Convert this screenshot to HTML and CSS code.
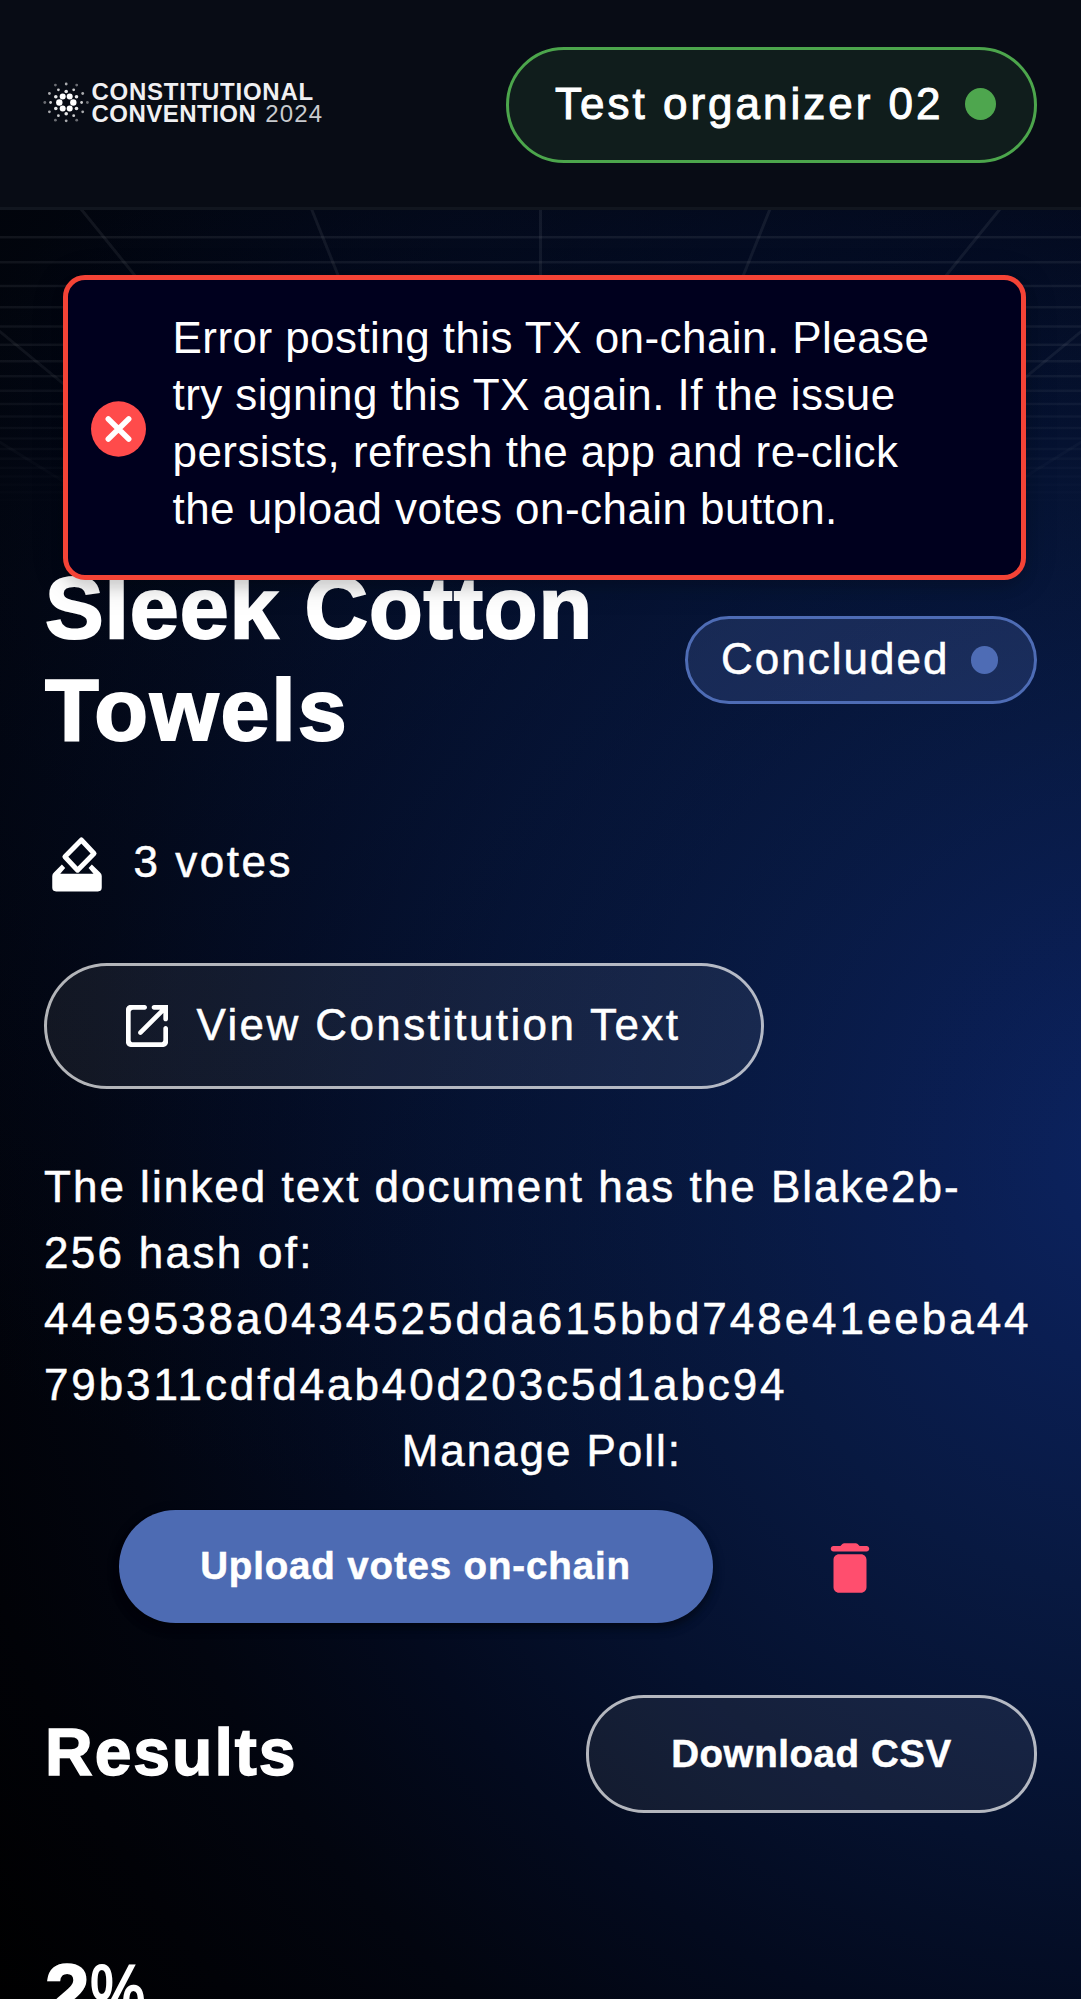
FILE: index.html
```html
<!DOCTYPE html>
<html lang="en">
<head>
<meta charset="utf-8">
<title>Sleek Cotton Towels</title>
<link rel="stylesheet" href="styles.css">
</head>
<body>
<svg class="grid" width="1081" height="330" viewBox="0 209 1081 330" fill="none" stroke="#fff" aria-hidden="true">
  <defs>
    <linearGradient id="fade" x1="0" y1="209" x2="0" y2="520" gradientUnits="userSpaceOnUse">
      <stop offset="0" stop-color="#fff"/>
      <stop offset=".5" stop-color="#fff" stop-opacity=".85"/>
      <stop offset="1" stop-color="#fff" stop-opacity="0"/>
    </linearGradient>
    <mask id="m" maskUnits="userSpaceOnUse" x="0" y="209" width="1081" height="330"><rect x="0" y="209" width="1081" height="330" fill="url(#fade)" stroke="none"/></mask>
  </defs>
  <g mask="url(#m)" stroke-opacity=".068" stroke-width="2.6">
    <path d="M0 237.2H1081M0 262.3H1081M0 286H1081M0 307.2H1081M0 326.5H1081M0 344.7H1081M0 361.2H1081M0 376.3H1081M0 390.8H1081M0 404H1081M0 416.5H1081M0 428H1081M0 438.5H1081M0 449H1081M0 458.6H1081M0 467.8H1081M0 476.5H1081M0 484.6H1081M0 492.4H1081M0 500H1081M0 507H1081"/>
    <path stroke-width="3" d="M540.5 209V530M311.5 209L440 530M770 209L641 530M81 209L341 530M1000 209L740 530M-149 209L241 530M1230 209L840 530M-378 209L142 530M1459 209L939 530"/>
  </g>
</svg>

<header class="topbar">
  <a class="brand">
    <svg width="46" height="42" viewBox="43 81.5 46 42" fill="#fff" aria-hidden="true">
      <g><circle cx="59.3" cy="103" r="3.2"/><circle cx="73.3" cy="103" r="3.2"/><circle cx="62.7" cy="97" r="3"/><circle cx="69.7" cy="97" r="3"/><circle cx="62.7" cy="109" r="3"/><circle cx="69.7" cy="109" r="3"/></g>
      <g opacity=".9"><circle cx="66.2" cy="92" r="1.8"/><circle cx="66.2" cy="114.3" r="1.8"/><circle cx="55.8" cy="97.3" r="1.8"/><circle cx="76.5" cy="97.3" r="1.8"/><circle cx="55.8" cy="109" r="1.8"/><circle cx="76.5" cy="109" r="1.8"/></g>
      <g opacity=".8"><circle cx="58.4" cy="90.3" r="1.4"/><circle cx="73.7" cy="90.3" r="1.4"/><circle cx="50.6" cy="103" r="1.4"/><circle cx="81.6" cy="103" r="1.4"/><circle cx="58.4" cy="116.2" r="1.4"/><circle cx="73.7" cy="116.2" r="1.4"/></g>
      <g opacity=".65"><circle cx="66.2" cy="84.5" r="1.4"/><circle cx="66.2" cy="121.3" r="1.4"/><circle cx="49.4" cy="94" r="1.4"/><circle cx="82.7" cy="94" r="1.4"/><circle cx="49.4" cy="112.3" r="1.4"/><circle cx="82.7" cy="112.3" r="1.4"/></g>
      <g opacity=".4"><circle cx="55.4" cy="85.6" r="1.4"/><circle cx="76.7" cy="85.6" r="1.4"/><circle cx="44.8" cy="103" r="1.4"/><circle cx="87.4" cy="103" r="1.4"/><circle cx="55.4" cy="120.7" r="1.4"/><circle cx="76.7" cy="120.7" r="1.4"/></g>
    </svg>
    <span class="brand-text">
      <span class="brand-1">CONSTITUTIONAL</span>
      <span class="brand-2"><b>CONVENTION</b><span>2024</span></span>
    </span>
  </a>
  <div class="user"><span>Test organizer 02</span><i class="dot"></i></div>
</header>

<main class="page">
  <section class="title-row">
    <h1><span class="h-a">Sleek Cotton</span><br><span class="h-b">Towels</span></h1>
    <div class="status"><span>Concluded</span><i class="dot"></i></div>
  </section>

  <div class="votes">
    <svg width="66" height="66" viewBox="0 0 24 24" fill="#fff" aria-hidden="true">
      <path d="M6.500 11.800L7.700 13.100L5.900 15.200H18L16.200 13.100L17.400 11.800L20.300 14.600Q21 15.200 21 16V20.200Q21 21.600 19.600 21.600H4.400Q3 21.600 3 20.200V16Q3 15.200 3.700 14.600Z"/>
      <path d="M13.600 2.900L18.200 7.800L12.200 13.900L7.600 9Z" fill="none" stroke="#fff" stroke-width="1.800" stroke-linejoin="round"/>
    </svg>
    <span>3 votes</span>
  </div>

  <a class="view">
    <svg width="56" height="56" viewBox="0 0 24 24" fill="#fff" aria-hidden="true"><path d="M18 19H6c-.55 0-1-.45-1-1V6c0-.55.45-1 1-1h5c.55 0 1-.45 1-1s-.45-1-1-1H5c-1.110 0-2 .9-2 2v14c0 1.100.9 2 2 2h14c1.100 0 2-.9 2-2v-6c0-.55-.45-1-1-1s-1 .45-1 1v5c0 .55-.45 1-1 1zM14 4c0 .55.45 1 1 1h2.590l-9.130 9.130c-.39.39-.39 1.020 0 1.410.39.39 1.020.39 1.410 0L19 6.410V9c0 .55.45 1 1 1s1-.45 1-1V3h-6c-.55 0-1 .45-1 1z"/></svg>
    <span>View Constitution Text</span>
  </a>

  <p class="hash"><span class="p-a">The linked text document has the Blake2b-</span><br><span class="p-b">256 hash of:</span><br><span class="p-c">44e9538a0434525dda615bbd748e41eeba44</span><br><span class="p-d">79b311cdfd4ab40d203c5d1abc94</span></p>

  <p class="manage">Manage Poll:</p>
  <div class="actions">
    <button class="upload">Upload votes on-chain</button>
    <svg width="66" height="66" viewBox="0 0 24 24" fill="#ff4e6e" aria-label="Delete"><path d="M6 19c0 1.100.9 2 2 2h8c1.100 0 2-.9 2-2V9c0-1.100-.9-2-2-2H8c-1.100 0-2 .9-2 2v10zM18 4h-2.500l-.71-.71c-.18-.18-.44-.29-.7-.29H9.910c-.26 0-.52.11-.7.29L8.500 4H6c-.55 0-1 .45-1 1s.45 1 1 1h12c.55 0 1-.45 1-1s-.45-1-1-1z"/></svg>
  </div>

  <section class="results">
    <h2>Results</h2>
    <button class="download">Download CSV</button>
  </section>
  <div class="percent"><b>2</b><span>%</span></div>
</main>

<div class="toast" role="alert">
  <svg width="55" height="56" viewBox="0 0 55 56" aria-hidden="true"><ellipse cx="27.500" cy="28" rx="27.500" ry="27.700" fill="#ff4b4b"/><path d="M17.300 18L37.700 38M37.700 18L17.300 38" stroke="#fff" stroke-width="5.500" stroke-linecap="round"/></svg>
  <p>Error posting this TX on-chain. Please<br>try signing this TX again. If the issue<br>persists, refresh the app and re-click<br>the upload votes on-chain button.</p>
</div>
</body>
</html>
```
FILE: styles.css
```css
* { box-sizing: border-box; }
html { background: #000; }
body {
  margin: 0;
  position: relative;
  height: 1999px;
  overflow: hidden;
  color: #fff;
  font: 400 44px/66px "Liberation Sans", Arial, sans-serif;
  -webkit-text-stroke: .5px currentColor;
  background:
    radial-gradient(ellipse 900px 1000px at 420px 500px, rgba(8, 28, 76, .34), rgba(8, 28, 76, 0)),
    radial-gradient(ellipse 1190px 1230px at 1160px 1150px, #0c2462 0%, #0a1e52 18%, #081941 36%, #05112e 58%, #030a1e 74%, #02050f 90%, #010207 104%, #000 120%);
}
h1, h2, p { margin: 0; }
button { font: inherit; color: inherit; border: 0; padding: 0; -webkit-text-stroke: inherit; }
.dot { display: block; border-radius: 50%; flex: none; }

.grid { position: absolute; left: 0; top: 209px; }

.topbar {
  position: relative;
  height: 210px;
  padding: 0 44px 0 43px;
  display: flex;
  justify-content: space-between;
  align-items: center;
  background: #080c15;
  border-bottom: 3px solid #11161f;
}
.brand { display: flex; gap: 2.500px; margin-bottom: 1px; -webkit-text-stroke: 0; }
.brand-text { display: flex; flex-direction: column; color: #f0f0f2; font-size: 24px; line-height: 22.400px; margin-top: 0; }
.brand-1 { font-weight: 700; letter-spacing: .745px; }
.brand-2 { display: flex; gap: 9px; }
.brand-2 b { letter-spacing: .48px; }
.brand-2 span { letter-spacing: 1.100px; color: #c9cbcf; }

.user {
  width: 531px;
  height: 116px;
  margin-top: 2px;
  padding: 0 38.500px 0 46px;
  display: flex;
  align-items: center;
  justify-content: space-between;
  border: 3px solid #4ca64c;
  border-radius: 58px;
  background: #101d1c;
  letter-spacing: 3px;
  -webkit-text-stroke-width: 1px;
}
.user span { padding-bottom: 2px; }
.user .dot { width: 31px; height: 32px; background: #4ea64e; margin-top: -1px; }

.page { position: relative; padding: 346.500px 44px 0; display: flex; flex-direction: column; }

.title-row { display: flex; justify-content: space-between; align-items: center; }
h1 { font-size: 88px; line-height: 102px; font-weight: 700; white-space: nowrap; -webkit-text-stroke-width: 2px; padding-left: 1px; }
.h-a { letter-spacing: .85px; }
.h-b { letter-spacing: 2px; }

.status {
  width: 352px;
  height: 88px;
  margin-top: 3px;
  padding: 0 36px 0 33px;
  display: flex;
  align-items: center;
  justify-content: space-between;
  border: 3px solid #4e6cb5;
  border-radius: 44px;
  background: rgba(78, 108, 181, .25);
  letter-spacing: 2px;
}
.status span { padding-bottom: 2px; }
.status .dot { width: 27.500px; height: 27.500px; background: #4e6cb5; }

.votes { display: flex; align-items: center; gap: 23.500px; margin-top: 71px; height: 66px; letter-spacing: 2.520px; }
.votes span { padding-bottom: 6px; }

.view {
  width: 720px;
  height: 126px;
  margin-top: 65px;
  padding: 0 72px;
  display: flex;
  align-items: center;
  gap: 21.500px;
  border: 3px solid rgba(255, 255, 255, .7);
  border-radius: 63px;
  background: rgba(255, 255, 255, .065);
  background-clip: padding-box;
  letter-spacing: 2.390px;
  white-space: nowrap;
}
.view span { padding-bottom: 2px; }

.hash { margin-top: 65.500px; white-space: nowrap; }
.p-a { letter-spacing: 2.015px; }
.p-b { letter-spacing: 2.300px; }
.p-c { letter-spacing: 2.960px; }
.p-d { letter-spacing: 2.900px; }
.manage { text-align: center; letter-spacing: 1.950px; padding-left: 2.500px; }

.actions { display: flex; align-items: center; margin: 25.500px 0 0 74.500px; gap: 104px; }
.actions svg { margin-top: 3px; }
.upload {
  width: 594px;
  height: 113px;
  border-radius: 57px;
  background: #4d6bb3;
  font-size: 38.500px;
  font-weight: 700;
  letter-spacing: .85px;
  box-shadow: 0 8px 14px -5px rgba(0, 0, 0, .3), 0 5px 6px rgba(0, 0, 0, .2), 0 3px 14px rgba(0, 0, 0, .15);
}

.results { display: flex; align-items: center; justify-content: space-between; margin-top: 72px; }
h2 { font-size: 66px; line-height: 90px; letter-spacing: 2px; padding: 0 0 4px 1px; -webkit-text-stroke-width: 1.500px; }
.download {
  width: 451px;
  height: 118px;
  border: 3px solid rgba(255, 255, 255, .7);
  border-radius: 58px;
  background: rgba(255, 255, 255, .065);
  background-clip: padding-box;
  font-size: 38.500px;
  font-weight: 700;
  letter-spacing: .58px;
}

.percent { display: flex; align-items: baseline; margin-top: 130px; padding-left: 1px; font-size: 80px; line-height: 100px; -webkit-text-stroke-width: 2px; }
.percent span { font-size: 78px; transform: scaleX(.8); transform-origin: left; }

.toast {
  position: absolute;
  left: 63px;
  top: 275px;
  width: 963px;
  height: 305px;
  padding: 0 0 0 22.500px;
  display: flex;
  align-items: center;
  gap: 27px;
  border: 5.500px solid #f44336;
  border-radius: 22px;
  background: #00001e;
  box-shadow: 0 4px 34px rgba(0, 0, 0, .14), 0 8px 14px rgba(0, 0, 0, .12);
  line-height: 57.200px;
  letter-spacing: .44px;
  white-space: nowrap;
  -webkit-text-stroke-width: 0;
}
.toast svg { margin-top: 2px; }
.toast p { margin-bottom: 9px; }
```
